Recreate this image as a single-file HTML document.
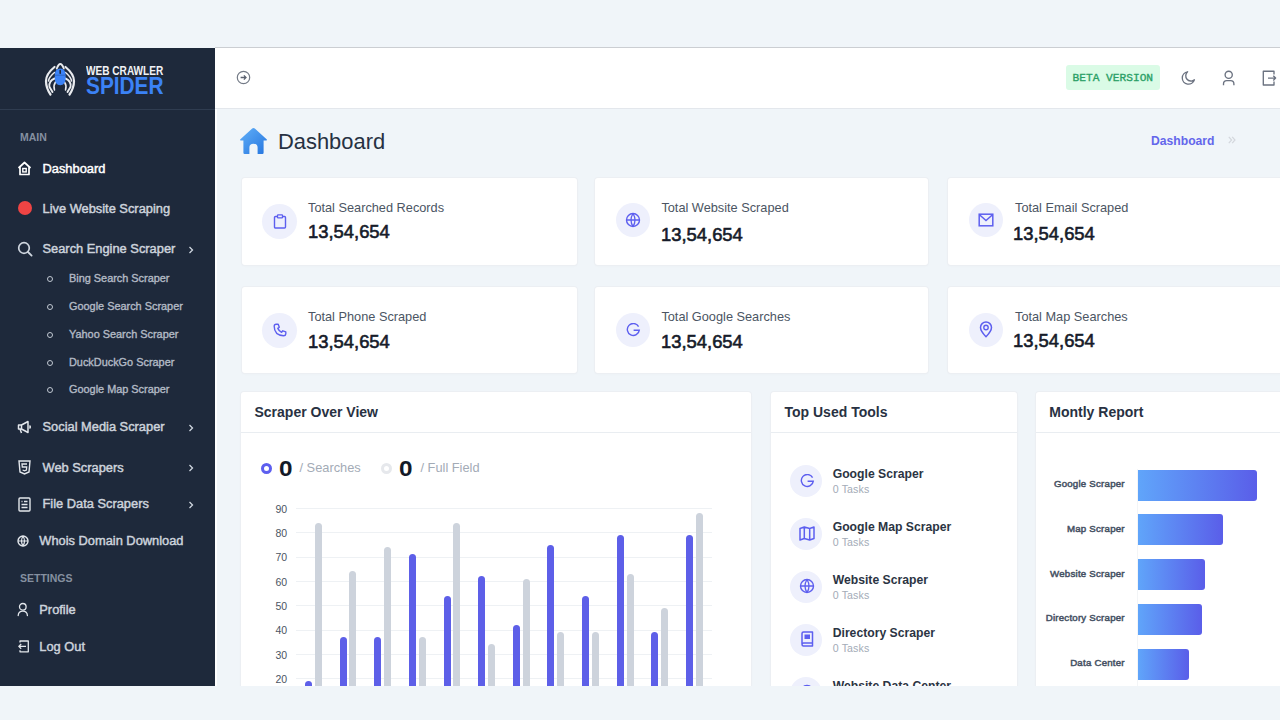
<!DOCTYPE html>
<html><head><meta charset="utf-8">
<style>
*{margin:0;padding:0;box-sizing:border-box}
html,body{width:1280px;height:720px;overflow:hidden;background:#f0f5f9;font-family:"Liberation Sans",sans-serif}
.a{position:absolute;white-space:nowrap;line-height:1}
#sb{position:absolute;left:0;top:48px;width:215px;height:638px;background:#1e293b}
#hd{position:absolute;left:215px;top:47px;width:1065px;height:62px;background:#fff;border-top:1px solid #cbced2;border-bottom:1px solid #e3e7ec}
.si{color:#cdd3dc;font-weight:normal;font-size:12.85px;-webkit-text-stroke:.45px currentColor}
.ss{color:#b3bac5;font-weight:normal;font-size:10.9px;-webkit-text-stroke:.35px currentColor}
.sh{color:#8590a0;font-weight:bold;font-size:10.5px}
.card{position:absolute;background:#fff;border-radius:3px;box-shadow:0 0 0 1px #eceff3, 0 1px 3px rgba(0,0,0,.03)}
.ic{position:absolute;border-radius:50%;background:#eef0fc}
.lbl{color:#4b5563;font-size:12.75px}
.num{color:#161c2a;font-weight:normal;font-size:18.4px;-webkit-text-stroke:.6px currentColor}
.ct{color:#283142;font-weight:bold;font-size:14px}
</style></head><body>

<!-- SIDEBAR -->
<div id="sb"></div>
<div class="a" style="left:0;top:109px;width:215px;height:1px;background:#2f3c50"></div>

<!-- logo -->
<svg class="a" style="left:40px;top:58px" width="40" height="40" viewBox="0 0 40 40">
  <g fill="none" stroke="#e9ebef" stroke-linecap="round">
    <path d="M16.8 10.5 Q20.3 1.5 23.8 10.5" stroke-width="1.9"/>
    <path d="M14.5 9 Q6 16 6 23 Q6 30 10.5 36.5" stroke-width="2.2"/>
    <path d="M25.5 9 Q34 16 34 23 Q34 30 29.5 36.5" stroke-width="2.2"/>
    <path d="M14.5 14.5 Q9 19 8.5 23" stroke-width="1.6"/>
    <path d="M25.5 14.5 Q31 19 31.5 23" stroke-width="1.6"/>
    <path d="M14.5 20.5 Q8.5 23 9.5 29 L12.5 34" stroke-width="1.9"/>
    <path d="M25.5 20.5 Q31.5 23 30.5 29 L27.5 34" stroke-width="1.9"/>
    <path d="M15.5 24 Q13 28 14.5 32" stroke-width="1.5"/>
    <path d="M24.5 24 Q27 28 25.5 32" stroke-width="1.5"/>
  </g>
  <path d="M20.2 10.5 Q25.6 10.5 25.6 17 L25.6 20 Q25.6 27.3 20.2 27.3 Q14.8 27.3 14.8 20 L14.8 17 Q14.8 10.5 20.2 10.5 Z" fill="#3b82f6"/>
  <path d="M14.8 17.2 H25.6" stroke="#2a5fb8" stroke-width=".8"/>
  <rect x="19.4" y="11.8" width="1.6" height="4.2" rx=".8" fill="#1e293b"/>
</svg>
<div class="a" style="left:86px;top:64.7px;font-size:12px;font-weight:bold;color:#f1f3f6;transform:scaleX(.84);transform-origin:0 0">WEB CRAWLER</div>
<div class="a" style="left:85.5px;top:75.4px;font-size:23px;font-weight:bold;color:#3b82f6;transform:scaleX(.905);transform-origin:0 0">SPIDER</div>

<div class="a sh" style="left:20px;top:132px">MAIN</div>

<!-- dashboard -->
<svg class="a" style="left:17px;top:161px" width="15" height="15" viewBox="0 0 15 15"><path d="M1.5 7 L7.5 1.5 L13.5 7 M3 5.8 V13.5 H12 V5.8" fill="none" stroke="#fff" stroke-width="1.7" stroke-linejoin="round"/><rect x="5.8" y="7.5" width="3.4" height="3.4" fill="none" stroke="#fff" stroke-width="1.4"/></svg>
<div class="a si" style="left:42.5px;top:162.9px;color:#fff">Dashboard</div>

<div class="a" style="left:17.5px;top:201px;width:14px;height:14px;border-radius:50%;background:#ef4444"></div>
<div class="a si" style="left:42.5px;top:202.9px">Live Website Scraping</div>

<svg class="a" style="left:16.5px;top:240.5px" width="16" height="16" viewBox="0 0 16 16"><circle cx="7" cy="7" r="5.3" fill="none" stroke="#cfd6df" stroke-width="1.7"/><path d="M11 11 L14.6 14.6" stroke="#cfd6df" stroke-width="1.8" stroke-linecap="round"/></svg>
<div class="a si" style="left:42.5px;top:242.9px">Search Engine Scraper</div>
<svg class="a" style="left:188px;top:245.5px" width="6" height="8" viewBox="0 0 6 8"><path d="M1.5 1 L4.5 4 L1.5 7" fill="none" stroke="#cfd6df" stroke-width="1.3"/></svg>

<div class="a" style="left:47.3px;top:276.1px;width:6px;height:6px;border-radius:50%;border:1.3px solid #c0c7d1"></div>
<div class="a ss" style="left:69px;top:273.2px">Bing Search Scraper</div>
<div class="a" style="left:47.3px;top:303.8px;width:6px;height:6px;border-radius:50%;border:1.3px solid #c0c7d1"></div>
<div class="a ss" style="left:69px;top:301.1px">Google Search Scraper</div>
<div class="a" style="left:47.3px;top:331.7px;width:6px;height:6px;border-radius:50%;border:1.3px solid #c0c7d1"></div>
<div class="a ss" style="left:69px;top:328.9px">Yahoo Search Scraper</div>
<div class="a" style="left:47.3px;top:359.5px;width:6px;height:6px;border-radius:50%;border:1.3px solid #c0c7d1"></div>
<div class="a ss" style="left:69px;top:356.6px">DuckDuckGo Scraper</div>
<div class="a" style="left:47.3px;top:387.2px;width:6px;height:6px;border-radius:50%;border:1.3px solid #c0c7d1"></div>
<div class="a ss" style="left:69px;top:384.4px">Google Map Scraper</div>

<!-- social -->
<svg class="a" style="left:17px;top:420px" width="15" height="14" viewBox="0 0 15 14"><path d="M1.5 5 H4.5 L11 1.5 V12.5 L4.5 9 H1.5 Z M4.5 5 V9 M3 9 L4.5 13 M12.5 5.5 Q14 7 12.5 8.5" fill="none" stroke="#e3e7ec" stroke-width="1.5" stroke-linejoin="round"/></svg>
<div class="a si" style="left:42.5px;top:421.4px">Social Media Scraper</div>
<svg class="a" style="left:188px;top:424px" width="6" height="8" viewBox="0 0 6 8"><path d="M1.5 1 L4.5 4 L1.5 7" fill="none" stroke="#cfd6df" stroke-width="1.3"/></svg>

<svg class="a" style="left:18px;top:460px" width="13" height="15" viewBox="0 0 13 15"><path d="M1 1 H12 L11 12 L6.5 14 L2 12 Z" fill="none" stroke="#e3e7ec" stroke-width="1.4"/><path d="M9 4 H4 L4.3 7 H8.7 L8.4 10 L6.5 10.8 L4.6 10" fill="none" stroke="#e3e7ec" stroke-width="1.3"/></svg>
<div class="a si" style="left:42.5px;top:461.9px">Web Scrapers</div>
<svg class="a" style="left:188px;top:464px" width="6" height="8" viewBox="0 0 6 8"><path d="M1.5 1 L4.5 4 L1.5 7" fill="none" stroke="#cfd6df" stroke-width="1.3"/></svg>

<svg class="a" style="left:18px;top:497px" width="13" height="15" viewBox="0 0 13 15"><rect x="1" y="1" width="11" height="13" rx="1" fill="none" stroke="#e3e7ec" stroke-width="1.4"/><path d="M3.5 4.5 H4.5 M6 4.5 H9.5 M3.5 7.5 H9.5 M3.5 10.5 H9.5" stroke="#e3e7ec" stroke-width="1.3"/></svg>
<div class="a si" style="left:42.5px;top:498.4px">File Data Scrapers</div>
<svg class="a" style="left:188px;top:500.5px" width="6" height="8" viewBox="0 0 6 8"><path d="M1.5 1 L4.5 4 L1.5 7" fill="none" stroke="#cfd6df" stroke-width="1.3"/></svg>

<svg class="a" style="left:17px;top:535px" width="12" height="12" viewBox="0 0 12 12"><circle cx="6" cy="6" r="5" fill="none" stroke="#e3e7ec" stroke-width="1.4"/><path d="M1 6 H11 M6 1 Q3 6 6 11 M6 1 Q9 6 6 11" fill="none" stroke="#e3e7ec" stroke-width="1.2"/></svg>
<div class="a si" style="left:39.3px;top:534.9px">Whois Domain Download</div>

<div class="a sh" style="left:20px;top:573px">SETTINGS</div>

<svg class="a" style="left:17px;top:602px" width="12" height="15" viewBox="0 0 12 15"><circle cx="5.8" cy="4.8" r="3.3" fill="none" stroke="#e3e7ec" stroke-width="1.3"/><path d="M1.2 13.5 Q1.5 9.2 5.8 9.2 Q10.1 9.2 10.4 13.5" fill="none" stroke="#e3e7ec" stroke-width="1.3" stroke-linecap="round"/></svg>
<div class="a si" style="left:39.3px;top:604.2px">Profile</div>

<svg class="a" style="left:17px;top:639.5px" width="13" height="13" viewBox="0 0 13 13"><path d="M3 2.5 V1 H11.3 V11.8 H3 V10.3 M9 6.4 H1.8 M4.2 4 L1.8 6.4 L4.2 8.8" fill="none" stroke="#e3e7ec" stroke-width="1.3" stroke-linejoin="round"/></svg>
<div class="a si" style="left:39.3px;top:640.7px">Log Out</div>

<div class="a" style="left:215px;top:108px;width:2px;height:578px;background:#fff"></div>
<!-- HEADER -->
<div id="hd"></div>
<svg class="a" style="left:236px;top:70px" width="15" height="15" viewBox="0 0 15 15"><circle cx="7.5" cy="7.5" r="6.2" fill="none" stroke="#737a86" stroke-width="1.2"/><path d="M4.6 7.5 H10 M7.9 5.4 L10 7.5 L7.9 9.6" fill="none" stroke="#5b6270" stroke-width="1.3"/></svg>
<div class="a" style="left:1066px;top:65px;width:94px;height:25px;background:#dafbe6;border-radius:3px"></div>
<div class="a" style="left:1072.5px;top:73.4px;font-family:'Liberation Mono',monospace;font-size:11.2px;-webkit-text-stroke:.35px currentColor;color:#2aa066">BETA VERSION</div>
<svg class="a" style="left:1179.5px;top:69.5px" width="16" height="16" viewBox="0 0 16 16"><path d="M7.6 1.8 A6.2 6.2 0 1 0 14.4 9.8 A4.8 4.8 0 0 1 7.6 1.8 Z" fill="none" stroke="#6b7280" stroke-width="1.35" stroke-linejoin="round"/></svg>
<svg class="a" style="left:1221.5px;top:69.8px" width="14" height="16" viewBox="0 0 14 16"><circle cx="6.7" cy="4.8" r="3.6" fill="none" stroke="#6b7280" stroke-width="1.35"/><path d="M1.5 15.2 V14 Q1.5 10.6 4.8 10.6 H8.6 Q11.9 10.6 11.9 14 V15.2" fill="none" stroke="#6b7280" stroke-width="1.35"/></svg>
<svg class="a" style="left:1261.5px;top:69.5px" width="16" height="17" viewBox="0 0 16 17"><path d="M12 4.6 V1.2 H1.3 V15 H12 V11.6 M6 8.1 H13.6 M11.3 5.8 L13.6 8.1 L11.3 10.4" fill="none" stroke="#6b7280" stroke-width="1.35" stroke-linejoin="round"/></svg>

<!-- TITLE -->
<svg class="a" style="left:239px;top:127px" width="29" height="28" viewBox="0 0 29 28">
 <defs><linearGradient id="hg" x1="0" y1="0" x2="1" y2="1"><stop offset="0" stop-color="#62b0f8"/><stop offset="1" stop-color="#2575df"/></linearGradient></defs>
 <path d="M13.2 1.6 Q14.5 0.5 15.8 1.6 L27.6 12.2 Q28.6 13.4 27.2 13.6 L24.6 13.6 L24.6 25.8 Q24.6 27 23.4 27 L18.6 27 L18.6 20.5 Q18.6 16.8 14.5 16.8 Q10.4 16.8 10.4 20.5 L10.4 27 L5.6 27 Q4.4 27 4.4 25.8 L4.4 13.6 L1.8 13.6 Q0.4 13.4 1.4 12.2 Z" fill="url(#hg)"/>
</svg>
<div class="a" style="left:278px;top:130.9px;font-size:21.9px;color:#273142">Dashboard</div>
<div class="a" style="left:1151px;top:135.2px;font-size:12.16px;font-weight:bold;color:#6366eb">Dashboard</div>
<svg class="a" style="left:1228px;top:136px" width="8" height="8" viewBox="0 0 8 8"><path d="M0.8 0.8 L3.6 4 L0.8 7.2 M4.2 0.8 L7 4 L4.2 7.2" fill="none" stroke="#d3d7dd" stroke-width="1.2"/></svg>

<!-- STAT CARDS -->
<div class="card" style="left:241.5px;top:178px;width:335px;height:87px"></div>
<div class="card" style="left:595px;top:178px;width:333px;height:87px"></div>
<div class="card" style="left:948px;top:178px;width:340px;height:87px"></div>
<div class="card" style="left:241.5px;top:287px;width:335px;height:86px"></div>
<div class="card" style="left:595px;top:287px;width:333px;height:86px"></div>
<div class="card" style="left:948px;top:287px;width:340px;height:86px"></div>

<div class="ic" style="left:262px;top:203.5px;width:35px;height:35px"></div>
<svg class="a" style="left:273px;top:214px" width="14" height="15" viewBox="0 0 14 15"><rect x="1.5" y="2.5" width="11" height="11.5" rx="1" fill="none" stroke="#5d5fef" stroke-width="1.4"/><rect x="4.5" y="0.8" width="5" height="3" rx=".6" fill="#eef0fc" stroke="#5d5fef" stroke-width="1.3"/></svg>
<div class="a lbl" style="left:308px;top:201.7px">Total Searched Records</div>
<div class="a num" style="left:308px;top:223px">13,54,654</div>

<div class="ic" style="left:616px;top:203px;width:34px;height:34px"></div>
<svg class="a" style="left:625px;top:212px" width="16" height="16" viewBox="0 0 16 16"><circle cx="8" cy="8" r="6.5" fill="none" stroke="#5d5fef" stroke-width="1.4"/><path d="M1.5 8 H14.5 M8 1.5 Q4 8 8 14.5 M8 1.5 Q12 8 8 14.5" fill="none" stroke="#5d5fef" stroke-width="1.3"/></svg>
<div class="a lbl" style="left:661.4px;top:201.7px">Total Website Scraped</div>
<div class="a num" style="left:661px;top:225.8px">13,54,654</div>

<div class="ic" style="left:969px;top:203px;width:34px;height:34px"></div>
<svg class="a" style="left:978px;top:213px" width="16" height="14" viewBox="0 0 16 14"><rect x="1.2" y="1.2" width="13.6" height="11.6" fill="none" stroke="#5d5fef" stroke-width="1.5"/><path d="M1.5 1.8 L8 7.5 L14.5 1.8" fill="none" stroke="#5d5fef" stroke-width="1.5"/></svg>
<div class="a lbl" style="left:1015px;top:201.7px">Total Email Scraped</div>
<div class="a num" style="left:1013px;top:224.6px">13,54,654</div>

<div class="ic" style="left:262px;top:312.5px;width:35px;height:35px"></div>
<svg class="a" style="left:273px;top:322.5px" width="14" height="14" viewBox="0 0 14 14"><path d="M3.2 1.2 L5.2 1.2 L6.3 4.2 L4.8 5.4 Q6 8.2 8.6 9.3 L9.8 7.8 L12.8 8.9 L12.8 10.9 Q12.6 12.8 10.6 12.8 Q1.2 12 1.2 3.2 Q1.2 1.3 3.2 1.2 Z" fill="none" stroke="#5d5fef" stroke-width="1.4" stroke-linejoin="round"/></svg>
<div class="a lbl" style="left:308px;top:310.7px">Total Phone Scraped</div>
<div class="a num" style="left:308px;top:332.6px">13,54,654</div>

<div class="ic" style="left:616px;top:312.8px;width:34px;height:34px"></div>
<svg class="a" style="left:625.5px;top:323px" width="15" height="14" viewBox="0 0 15 14"><path d="M12.6 3.6 A6 6 0 1 0 13.3 7.2 H7.6" fill="none" stroke="#5d5fef" stroke-width="1.4"/></svg>
<div class="a lbl" style="left:661.4px;top:310.7px">Total Google Searches</div>
<div class="a num" style="left:661px;top:332.6px">13,54,654</div>

<div class="ic" style="left:969px;top:312.8px;width:34px;height:34px"></div>
<svg class="a" style="left:979px;top:320.5px" width="14" height="17" viewBox="0 0 14 17"><path d="M7 15.8 Q1.5 10 1.5 6.5 A5.5 5.5 0 0 1 12.5 6.5 Q12.5 10 7 15.8 Z" fill="none" stroke="#5d5fef" stroke-width="1.5" stroke-linejoin="round"/><circle cx="7" cy="6.5" r="2.2" fill="none" stroke="#5d5fef" stroke-width="1.4"/></svg>
<div class="a lbl" style="left:1015px;top:310.7px">Total Map Searches</div>
<div class="a num" style="left:1013px;top:332.4px">13,54,654</div>

<!-- CHART CARDS -->
<div class="card" style="left:240.5px;top:392px;width:510px;height:300px"></div>
<div class="card" style="left:770.5px;top:392px;width:246px;height:300px"></div>
<div class="card" style="left:1035.5px;top:392px;width:260px;height:300px"></div>
<div class="a" style="left:240.5px;top:432px;width:510px;height:1px;background:#e9edf1"></div>
<div class="a" style="left:770.5px;top:432px;width:246px;height:1px;background:#e9edf1"></div>
<div class="a" style="left:1035.5px;top:432px;width:260px;height:1px;background:#e9edf1"></div>
<div class="a ct" style="left:254.5px;top:405.2px">Scraper Over View</div>
<div class="a ct" style="left:784.5px;top:405.2px">Top Used Tools</div>
<div class="a ct" style="left:1049.3px;top:405.2px">Montly Report</div>

<!--CHART-START-->
<div class="a" style="left:260.5px;top:462.5px;width:11px;height:11px;border-radius:50%;border:3.3px solid #5d5fef"></div>
<div class="a" style="left:278.5px;top:458.5px;font-size:21.5px;font-weight:bold;color:#141a28;transform:scaleX(1.13);transform-origin:0 0">0</div>
<div class="a" style="left:299.5px;top:461.8px;font-size:12.8px;color:#a3abb6">/ Searches</div>
<div class="a" style="left:380.5px;top:462.5px;width:11px;height:11px;border-radius:50%;border:3.3px solid #e6e8ec"></div>
<div class="a" style="left:399px;top:458.5px;font-size:21.5px;font-weight:bold;color:#141a28;transform:scaleX(1.13);transform-origin:0 0">0</div>
<div class="a" style="left:420.5px;top:461.8px;font-size:12.8px;color:#a3abb6">/ Full Field</div>
<div class="a" style="left:296px;top:678.3px;width:416px;height:1px;background:#eef1f4"></div>
<div class="a" style="left:275.5px;top:673.8px;font-size:10.5px;color:#4b5563">20</div>
<div class="a" style="left:296px;top:654.0px;width:416px;height:1px;background:#eef1f4"></div>
<div class="a" style="left:275.5px;top:649.5px;font-size:10.5px;color:#4b5563">30</div>
<div class="a" style="left:296px;top:629.6px;width:416px;height:1px;background:#eef1f4"></div>
<div class="a" style="left:275.5px;top:625.1px;font-size:10.5px;color:#4b5563">40</div>
<div class="a" style="left:296px;top:605.3px;width:416px;height:1px;background:#eef1f4"></div>
<div class="a" style="left:275.5px;top:600.8px;font-size:10.5px;color:#4b5563">50</div>
<div class="a" style="left:296px;top:581.0px;width:416px;height:1px;background:#eef1f4"></div>
<div class="a" style="left:275.5px;top:576.5px;font-size:10.5px;color:#4b5563">60</div>
<div class="a" style="left:296px;top:556.7px;width:416px;height:1px;background:#eef1f4"></div>
<div class="a" style="left:275.5px;top:552.2px;font-size:10.5px;color:#4b5563">70</div>
<div class="a" style="left:296px;top:532.3px;width:416px;height:1px;background:#eef1f4"></div>
<div class="a" style="left:275.5px;top:527.8px;font-size:10.5px;color:#4b5563">80</div>
<div class="a" style="left:296px;top:508.0px;width:416px;height:1px;background:#eef1f4"></div>
<div class="a" style="left:275.5px;top:503.5px;font-size:10.5px;color:#4b5563">90</div>
<div class="a" style="left:304.9px;top:680.7px;width:7px;height:19.3px;background:#5d5fe8;border-radius:3.5px 3.5px 0 0"></div>
<div class="a" style="left:314.8px;top:522.6px;width:7px;height:177.4px;background:#cdd3dc;border-radius:3.5px 3.5px 0 0"></div>
<div class="a" style="left:339.5px;top:636.9px;width:7px;height:63.1px;background:#5d5fe8;border-radius:3.5px 3.5px 0 0"></div>
<div class="a" style="left:349.4px;top:571.3px;width:7px;height:128.7px;background:#cdd3dc;border-radius:3.5px 3.5px 0 0"></div>
<div class="a" style="left:374.2px;top:636.9px;width:7px;height:63.1px;background:#5d5fe8;border-radius:3.5px 3.5px 0 0"></div>
<div class="a" style="left:384.1px;top:546.9px;width:7px;height:153.1px;background:#cdd3dc;border-radius:3.5px 3.5px 0 0"></div>
<div class="a" style="left:408.8px;top:554.2px;width:7px;height:145.8px;background:#5d5fe8;border-radius:3.5px 3.5px 0 0"></div>
<div class="a" style="left:418.7px;top:636.9px;width:7px;height:63.1px;background:#cdd3dc;border-radius:3.5px 3.5px 0 0"></div>
<div class="a" style="left:443.5px;top:595.6px;width:7px;height:104.4px;background:#5d5fe8;border-radius:3.5px 3.5px 0 0"></div>
<div class="a" style="left:453.4px;top:522.6px;width:7px;height:177.4px;background:#cdd3dc;border-radius:3.5px 3.5px 0 0"></div>
<div class="a" style="left:478.1px;top:576.1px;width:7px;height:123.9px;background:#5d5fe8;border-radius:3.5px 3.5px 0 0"></div>
<div class="a" style="left:488.0px;top:644.2px;width:7px;height:55.8px;background:#cdd3dc;border-radius:3.5px 3.5px 0 0"></div>
<div class="a" style="left:512.8px;top:624.8px;width:7px;height:75.2px;background:#5d5fe8;border-radius:3.5px 3.5px 0 0"></div>
<div class="a" style="left:522.7px;top:578.6px;width:7px;height:121.4px;background:#cdd3dc;border-radius:3.5px 3.5px 0 0"></div>
<div class="a" style="left:547.4px;top:544.5px;width:7px;height:155.5px;background:#5d5fe8;border-radius:3.5px 3.5px 0 0"></div>
<div class="a" style="left:557.3px;top:632.1px;width:7px;height:67.9px;background:#cdd3dc;border-radius:3.5px 3.5px 0 0"></div>
<div class="a" style="left:582.1px;top:595.6px;width:7px;height:104.4px;background:#5d5fe8;border-radius:3.5px 3.5px 0 0"></div>
<div class="a" style="left:592.0px;top:632.1px;width:7px;height:67.9px;background:#cdd3dc;border-radius:3.5px 3.5px 0 0"></div>
<div class="a" style="left:616.8px;top:534.8px;width:7px;height:165.2px;background:#5d5fe8;border-radius:3.5px 3.5px 0 0"></div>
<div class="a" style="left:626.6px;top:573.7px;width:7px;height:126.3px;background:#cdd3dc;border-radius:3.5px 3.5px 0 0"></div>
<div class="a" style="left:651.4px;top:632.1px;width:7px;height:67.9px;background:#5d5fe8;border-radius:3.5px 3.5px 0 0"></div>
<div class="a" style="left:661.3px;top:607.8px;width:7px;height:92.2px;background:#cdd3dc;border-radius:3.5px 3.5px 0 0"></div>
<div class="a" style="left:686.0px;top:534.8px;width:7px;height:165.2px;background:#5d5fe8;border-radius:3.5px 3.5px 0 0"></div>
<div class="a" style="left:695.9px;top:512.9px;width:7px;height:187.1px;background:#cdd3dc;border-radius:3.5px 3.5px 0 0"></div>
<!--CHART-END-->
<!--REST-START-->
<div class="ic" style="left:790.4px;top:464.8px;width:32px;height:32px"></div>
<svg class="a" style="left:799.5px;top:473.5px" width="15" height="14" viewBox="0 0 15 14"><path d="M12.6 3.6 A6 6 0 1 0 13.3 7.2 H7.6" fill="none" stroke="#5d5fef" stroke-width="1.4"/></svg>
<div class="a" style="left:832.7px;top:468.4px;font-size:12.2px;font-weight:bold;color:#2b3443">Google Scraper</div>
<div class="a" style="left:832.7px;top:484.0px;font-size:10.6px;color:#a3abb7;letter-spacing:.15px">0 Tasks</div>
<div class="ic" style="left:790.4px;top:517.8px;width:32px;height:32px"></div>
<svg class="a" style="left:798.5px;top:525.7px" width="16" height="15" viewBox="0 0 16 15"><path d="M1 2.5 L5.3 1 L10.7 2.5 L15 1 V12.5 L10.7 14 L5.3 12.5 L1 14 Z M5.3 1 V12.5 M10.7 2.5 V14" fill="none" stroke="#5d5fef" stroke-width="1.5" stroke-linejoin="round"/></svg>
<div class="a" style="left:832.7px;top:521.3px;font-size:12.2px;font-weight:bold;color:#2b3443">Google Map Scraper</div>
<div class="a" style="left:832.7px;top:537.0px;font-size:10.6px;color:#a3abb7;letter-spacing:.15px">0 Tasks</div>
<div class="ic" style="left:790.4px;top:570.7px;width:32px;height:32px"></div>
<svg class="a" style="left:798.5px;top:578.0px" width="16" height="16" viewBox="0 0 16 16"><circle cx="8" cy="8" r="6.5" fill="none" stroke="#5d5fef" stroke-width="1.4"/><path d="M1.5 8 H14.5 M8 1.5 Q4 8 8 14.5 M8 1.5 Q12 8 8 14.5" fill="none" stroke="#5d5fef" stroke-width="1.3"/></svg>
<div class="a" style="left:832.7px;top:574.3px;font-size:12.2px;font-weight:bold;color:#2b3443">Website Scraper</div>
<div class="a" style="left:832.7px;top:589.9px;font-size:10.6px;color:#a3abb7;letter-spacing:.15px">0 Tasks</div>
<div class="ic" style="left:790.4px;top:623.7px;width:32px;height:32px"></div>
<svg class="a" style="left:799.5px;top:631.0px" width="14" height="16" viewBox="0 0 14 16"><path d="M2 13 V2.5 Q2 1 3.5 1 H12.5 V12 H3.5 Q2 12 2 13.5 Q2 15 3.5 15 H12.5 V12" fill="none" stroke="#5d5fef" stroke-width="1.5" stroke-linejoin="round"/><rect x="4.5" y="3.5" width="5.5" height="4.5" fill="#5d5fef"/></svg>
<div class="a" style="left:832.7px;top:627.2px;font-size:12.2px;font-weight:bold;color:#2b3443">Directory Scraper</div>
<div class="a" style="left:832.7px;top:642.9px;font-size:10.6px;color:#a3abb7;letter-spacing:.15px">0 Tasks</div>
<div class="ic" style="left:790.4px;top:676.6px;width:32px;height:32px"></div>
<svg class="a" style="left:798.5px;top:684.0px" width="16" height="16" viewBox="0 0 16 16"><circle cx="8" cy="8" r="6.5" fill="none" stroke="#5d5fef" stroke-width="1.4"/></svg>
<div class="a" style="left:832.7px;top:680.2px;font-size:12.2px;font-weight:bold;color:#2b3443">Website Data Center</div>
<div class="a" style="left:832.7px;top:695.8px;font-size:10.6px;color:#a3abb7;letter-spacing:.15px">0 Tasks</div>
<div class="a" style="left:1137.6px;top:469.5px;width:119.1px;height:31px;border-radius:0 3px 3px 0;background:linear-gradient(90deg,#60a5fa,#5a5ee9)"></div>
<div class="a" style="right:155.2px;top:478.9px;font-size:9.7px;letter-spacing:.22px;-webkit-text-stroke:.5px currentColor;color:#465264">Google Scraper</div>
<div class="a" style="left:1137.6px;top:514.3px;width:85.9px;height:31px;border-radius:0 3px 3px 0;background:linear-gradient(90deg,#60a5fa,#5a5ee9)"></div>
<div class="a" style="right:155.2px;top:523.7px;font-size:9.7px;letter-spacing:.22px;-webkit-text-stroke:.5px currentColor;color:#465264">Map Scraper</div>
<div class="a" style="left:1137.6px;top:559.1px;width:67.4px;height:31px;border-radius:0 3px 3px 0;background:linear-gradient(90deg,#60a5fa,#5a5ee9)"></div>
<div class="a" style="right:155.2px;top:568.5px;font-size:9.7px;letter-spacing:.22px;-webkit-text-stroke:.5px currentColor;color:#465264">Website Scraper</div>
<div class="a" style="left:1137.6px;top:603.9px;width:64.9px;height:31px;border-radius:0 3px 3px 0;background:linear-gradient(90deg,#60a5fa,#5a5ee9)"></div>
<div class="a" style="right:155.2px;top:613.3px;font-size:9.7px;letter-spacing:.22px;-webkit-text-stroke:.5px currentColor;color:#465264">Directory Scraper</div>
<div class="a" style="left:1137.6px;top:648.7px;width:51.4px;height:31px;border-radius:0 3px 3px 0;background:linear-gradient(90deg,#60a5fa,#5a5ee9)"></div>
<div class="a" style="right:155.2px;top:658.1px;font-size:9.7px;letter-spacing:.22px;-webkit-text-stroke:.5px currentColor;color:#465264">Data Center</div>
<div class="a" style="left:1137px;top:469px;width:1px;height:217px;background:#f3f5f7"></div>
<!--REST-END-->

<!-- bottom band -->
<div class="a" style="left:0;top:686px;width:1280px;height:34px;background:#f0f5f9"></div>
</body></html>
